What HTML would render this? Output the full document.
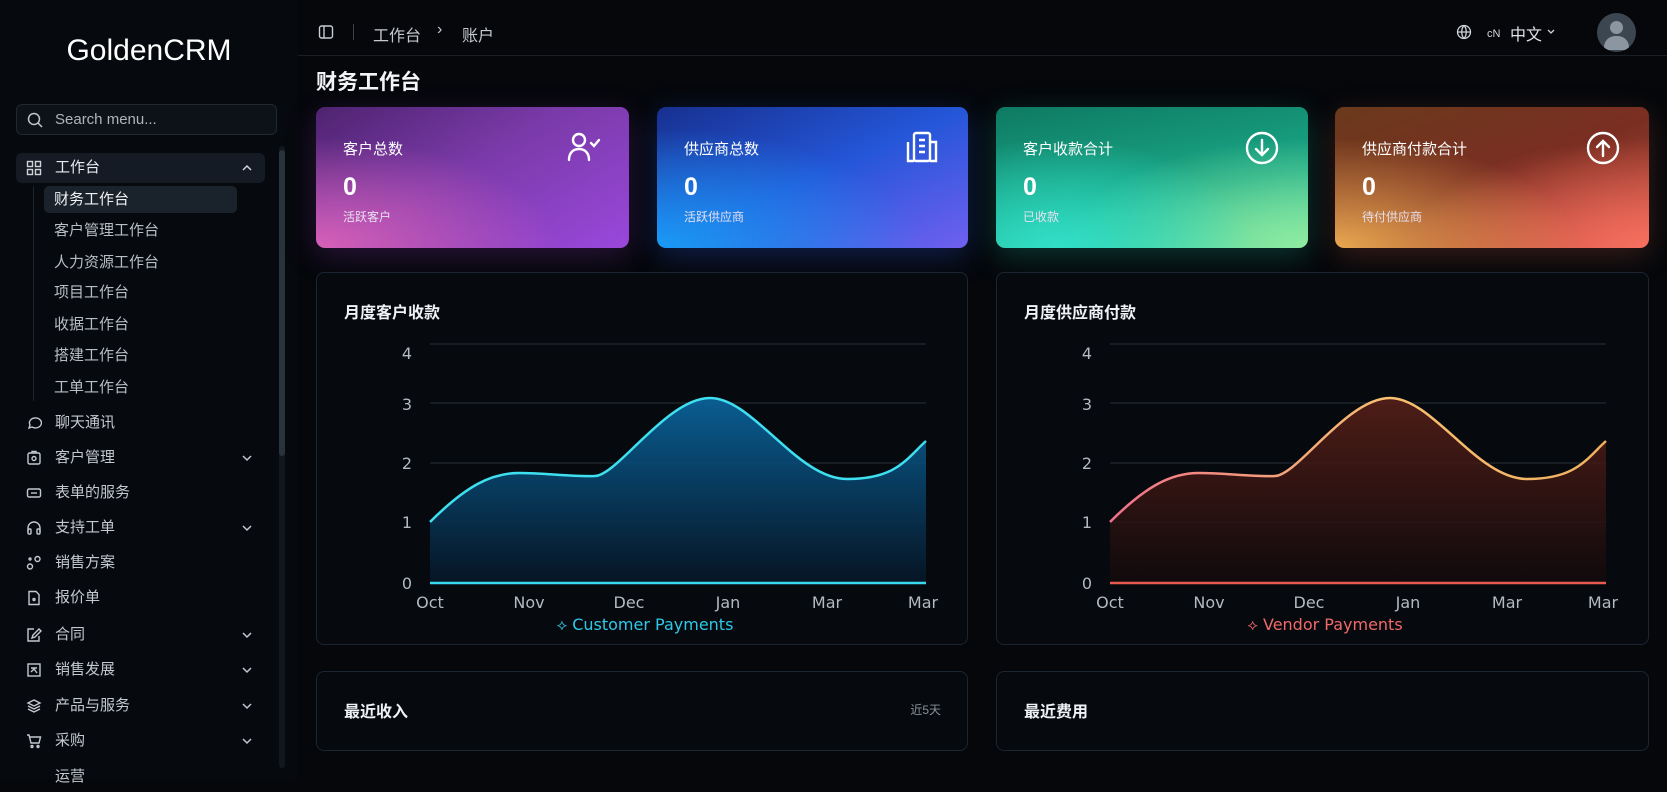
<!DOCTYPE html>
<html><head><meta charset="utf-8"><style>
*{box-sizing:border-box;margin:0;padding:0}
body{width:1667px;height:779px;overflow:hidden;background:#05070b;font-family:"Liberation Sans","Noto Sans CJK SC",sans-serif;color:#d6dae0;position:relative}
.abs{position:absolute}
#side{left:0;top:0;width:298px;height:779px;background:#06090d}
.logo{left:0;width:298px;top:34px;text-align:center;font-size:30px;color:#fff}
.search{left:16px;top:104px;width:261px;height:31px;border:1px solid #1f2731;border-radius:6px;background:#0d1218;font-size:15px;color:#aeb4bc;padding:6px 0 0 38px}
.mi{left:16px;width:249px;height:30px;font-size:15px;color:#c4c9d0;padding-left:39px;line-height:30px}
.mi svg.ic{position:absolute;left:10px;top:7px}
.mi .ch{position:absolute;left:225px;top:10px}
.sub{left:44px;width:193px;height:27px;font-size:15px;color:#b8bec6;padding-left:10px;line-height:27px}
.hdr{left:298px;top:55px;width:1369px;height:1px;background:#1a1f26}
.card{top:107px;height:141px;border-radius:9px;overflow:hidden}
.card .l{position:absolute;left:27px;top:31px;font-size:15px;color:#fff}
.card .n{position:absolute;left:27px;top:66px;font-size:25px;font-weight:bold;color:#fff}
.card .s{position:absolute;left:27px;top:101px;font-size:12px;color:#e8e0f0}
.card svg{position:absolute;right:28px;top:23px}
.panel{border:1px solid #1c2530;border-radius:8px;background:#06090e}
.pt{position:absolute;left:27px;font-size:16px;font-weight:bold;color:#f0f2f5}
</style></head><body>
<div id="side" class="abs"></div>
<div class="abs logo">GoldenCRM</div>
<div class="abs search"><svg class="abs" style="left:10px;top:7px" width="16" height="16" viewBox="0 0 16 16" fill="none" stroke="#c0c6ce" stroke-width="1.5"><circle cx="7" cy="7" r="5.5"/><path d="M11 11l4 4"/></svg>Search menu...</div>
<div class="abs mi" style="top:153px;height:30px;background:#141b24;border-radius:6px;color:#e8ebef"><svg class="ic" width="16" height="16" viewBox="0 0 16 16" fill="none" stroke="#d0d4da" stroke-width="1.4"><rect x="1.5" y="1.5" width="5" height="5"/><rect x="9.5" y="1.5" width="5" height="5"/><rect x="1.5" y="9.5" width="5" height="5"/><rect x="9.5" y="9.5" width="5" height="5"/></svg>工作台<svg class="ch" width="12" height="10" viewBox="0 0 12 10" fill="none" stroke="#d0d4da" stroke-width="1.5"><path d="M2 7l4-4 4 4"/></svg></div>
<div class="abs" style="left:33px;top:186px;width:1px;height:215px;background:#1c232c"></div>
<div class="abs sub" style="top:186px;background:#1a222c;border-radius:5px;color:#f0f2f4">财务工作台</div>
<div class="abs sub" style="top:217px">客户管理工作台</div>
<div class="abs sub" style="top:249px">人力资源工作台</div>
<div class="abs sub" style="top:279px">项目工作台</div>
<div class="abs sub" style="top:311px">收据工作台</div>
<div class="abs sub" style="top:342px">搭建工作台</div>
<div class="abs sub" style="top:374px">工单工作台</div>
<div class="abs mi" style="top:408px"><svg class="ic" width="16" height="16" viewBox="0 0 16 16" fill="none" stroke="#c4c9d0" stroke-width="1.4"><path d="M3 13l1-3a6 5 0 1 1 2 2z"/></svg>聊天通讯</div>
<div class="abs mi" style="top:443px"><svg class="ic" width="16" height="16" viewBox="0 0 16 16" fill="none" stroke="#c4c9d0" stroke-width="1.4"><rect x="2" y="3" width="12" height="11" rx="1.5"/><circle cx="8" cy="8.5" r="2"/><path d="M6 3V1.5h4V3"/></svg>客户管理<svg class="ch" width="12" height="10" viewBox="0 0 12 10" fill="none" stroke="#c4c9d0" stroke-width="1.5"><path d="M2 3l4 4 4-4"/></svg></div>
<div class="abs mi" style="top:478px"><svg class="ic" width="16" height="16" viewBox="0 0 16 16" fill="none" stroke="#c4c9d0" stroke-width="1.4"><rect x="1.5" y="4" width="13" height="8" rx="1.5"/><path d="M5 8h6"/></svg>表单的服务</div>
<div class="abs mi" style="top:513px"><svg class="ic" width="16" height="16" viewBox="0 0 16 16" fill="none" stroke="#c4c9d0" stroke-width="1.4"><path d="M2 12V8a6 6 0 0 1 12 0v4"/><rect x="2" y="9" width="3" height="5" rx="1"/><rect x="11" y="9" width="3" height="5" rx="1"/></svg>支持工单<svg class="ch" width="12" height="10" viewBox="0 0 12 10" fill="none" stroke="#c4c9d0" stroke-width="1.5"><path d="M2 3l4 4 4-4"/></svg></div>
<div class="abs mi" style="top:548px"><svg class="ic" width="16" height="16" viewBox="0 0 16 16" fill="none" stroke="#c4c9d0" stroke-width="1.4"><circle cx="4" cy="11.5" r="2.5"/><circle cx="11.5" cy="4" r="2.5"/><circle cx="4" cy="4" r="1"/></svg>销售方案</div>
<div class="abs mi" style="top:583px"><svg class="ic" width="16" height="16" viewBox="0 0 16 16" fill="none" stroke="#c4c9d0" stroke-width="1.4"><path d="M3 1.5h7l3 3v10H3z"/><circle cx="8" cy="9.5" r="1"/></svg>报价单</div>
<div class="abs mi" style="top:620px"><svg class="ic" width="16" height="16" viewBox="0 0 16 16" fill="none" stroke="#c4c9d0" stroke-width="1.4"><path d="M13 9v5H2V2h6"/><path d="M6 11l1-3 6-6 2 2-6 6z"/></svg>合同<svg class="ch" width="12" height="10" viewBox="0 0 12 10" fill="none" stroke="#c4c9d0" stroke-width="1.5"><path d="M2 3l4 4 4-4"/></svg></div>
<div class="abs mi" style="top:655px"><svg class="ic" width="16" height="16" viewBox="0 0 16 16" fill="none" stroke="#c4c9d0" stroke-width="1.4"><rect x="2" y="2" width="12" height="12"/><path d="M5 6h6M5 10l3-3 3 4"/></svg>销售发展<svg class="ch" width="12" height="10" viewBox="0 0 12 10" fill="none" stroke="#c4c9d0" stroke-width="1.5"><path d="M2 3l4 4 4-4"/></svg></div>
<div class="abs mi" style="top:691px"><svg class="ic" width="16" height="16" viewBox="0 0 16 16" fill="none" stroke="#c4c9d0" stroke-width="1.4"><path d="M8 2l6 3-6 3-6-3z"/><path d="M2 8l6 3 6-3M2 11l6 3 6-3"/></svg>产品与服务<svg class="ch" width="12" height="10" viewBox="0 0 12 10" fill="none" stroke="#c4c9d0" stroke-width="1.5"><path d="M2 3l4 4 4-4"/></svg></div>
<div class="abs mi" style="top:726px"><svg class="ic" width="16" height="16" viewBox="0 0 16 16" fill="none" stroke="#c4c9d0" stroke-width="1.4"><path d="M1 2h2l2 8h8l1.5-6H4"/><circle cx="6" cy="13.5" r="1"/><circle cx="12" cy="13.5" r="1"/></svg>采购<svg class="ch" width="12" height="10" viewBox="0 0 12 10" fill="none" stroke="#c4c9d0" stroke-width="1.5"><path d="M2 3l4 4 4-4"/></svg></div>
<div class="abs mi" style="top:762px">运营</div>
<div class="abs" style="left:279px;top:146px;width:6px;height:622px;background:#12171d;border-radius:3px"></div>
<div class="abs" style="left:279px;top:150px;width:6px;height:306px;background:#2a323c;border-radius:3px"></div>

<div class="abs hdr"></div>
<svg class="abs" style="left:318px;top:24px" width="16" height="16" viewBox="0 0 16 16" fill="none" stroke="#c8cdd3" stroke-width="1.4"><rect x="1.5" y="2" width="13" height="12" rx="2"/><path d="M6 2v12"/></svg>
<div class="abs" style="left:353px;top:24px;width:1px;height:16px;background:#3a414a"></div>
<div class="abs" style="left:373px;top:22px;font-size:16px;color:#c4c9d0">工作台</div>
<div class="abs" style="left:437px;top:21px;font-size:16px;color:#c4c9d0">›</div>
<div class="abs" style="left:462px;top:22px;font-size:16px;color:#c4c9d0">账户</div>
<svg class="abs" style="left:1456px;top:24px" width="16" height="16" viewBox="0 0 16 16" fill="none" stroke="#d0d4da" stroke-width="1.3"><circle cx="8" cy="8" r="6.5"/><path d="M1.5 8h13M8 1.5c-3 3-3 10 0 13M8 1.5c3 3 3 10 0 13"/></svg>
<div class="abs" style="left:1487px;top:28px;font-size:11px;color:#d0d4da">cN</div>
<div class="abs" style="left:1510px;top:21px;font-size:16px;color:#e0e3e7">中文</div>
<svg class="abs" style="left:1546px;top:28px" width="10" height="8" viewBox="0 0 10 8" fill="none" stroke="#d0d4da" stroke-width="1.3"><path d="M2 2l3 3 3-3"/></svg>
<div class="abs" style="left:1597px;top:13px;width:39px;height:39px;border-radius:50%;background:#3c4650;overflow:hidden"><div class="abs" style="left:13px;top:8px;width:13px;height:13px;border-radius:50%;background:#8c96a0"></div><div class="abs" style="left:7px;top:23px;width:25px;height:14px;border-radius:12px 12px 3px 3px;background:#8c96a0"></div></div>

<div class="abs" style="left:316px;top:66px;font-size:21px;font-weight:bold;color:#f2f4f6">财务工作台</div>

<div class="abs card" style="left:316px;width:313px;background:radial-gradient(ellipse at 0% 100%,#d860b8 0%,transparent 55%),linear-gradient(150deg,#4e2370 0%,#7a3aa8 45%,#9a48dc 100%);box-shadow:0 8px 30px rgba(150,60,200,.25)">
<div class="l">客户总数</div><div class="n">0</div><div class="s">活跃客户</div>
<svg width="36" height="34" viewBox="0 0 36 34" fill="none" stroke="#fff" stroke-width="2.4" stroke-linecap="round"><circle cx="14" cy="10" r="6"/><path d="M4 30c0-7 4-11 10-11s10 4 10 11"/><path d="M26 13l3 3 5-6"/></svg></div>
<div class="abs card" style="left:657px;width:311px;background:radial-gradient(ellipse at 0% 100%,#1a9af5 0%,transparent 60%),linear-gradient(155deg,#17308f 0%,#2456d8 50%,#7060f0 100%);box-shadow:0 8px 30px rgba(40,90,230,.3)">
<div class="l">供应商总数</div><div class="n">0</div><div class="s">活跃供应商</div>
<svg width="36" height="34" viewBox="0 0 36 34" fill="none" stroke="#fff" stroke-width="2.4"><rect x="10" y="3" width="16" height="28" rx="2"/><path d="M4 12v19h6M26 12h6v19h-6M15 10h6M15 16h6M15 22h6"/></svg></div>
<div class="abs card" style="left:996px;width:312px;background:radial-gradient(ellipse at 20% 100%,#30e0c8 0%,transparent 55%),radial-gradient(ellipse at 100% 100%,#90eca0 0%,transparent 55%),linear-gradient(170deg,#0e7a62 0%,#1aa888 60%,#50d0a0 100%);box-shadow:0 8px 30px rgba(30,200,160,.25)">
<div class="l">客户收款合计</div><div class="n">0</div><div class="s">已收款</div>
<svg width="36" height="36" viewBox="0 0 36 36" fill="none" stroke="#fff" stroke-width="2.4" stroke-linecap="round"><circle cx="18" cy="18" r="15"/><path d="M18 10v15M12 19l6 6 6-6"/></svg></div>
<div class="abs card" style="left:1335px;width:314px;background:radial-gradient(ellipse at 0% 100%,#eaa850 0%,transparent 55%),radial-gradient(ellipse at 100% 100%,#f87060 0%,transparent 55%),linear-gradient(160deg,#6a3a1c 0%,#7a2e22 50%,#c85040 100%);box-shadow:0 8px 30px rgba(230,110,70,.22)">
<div class="l">供应商付款合计</div><div class="n">0</div><div class="s">待付供应商</div>
<svg width="36" height="36" viewBox="0 0 36 36" fill="none" stroke="#fff" stroke-width="2.4" stroke-linecap="round"><circle cx="18" cy="18" r="15"/><path d="M18 26V11M12 17l6-6 6 6"/></svg></div>

<div class="abs panel" style="left:316px;top:272px;width:652px;height:373px">
<div class="pt" style="top:26px">月度客户收款</div>
<svg class="abs" style="left:0;top:0" width="652" height="373" font-family="DejaVu Sans,sans-serif">
<defs><linearGradient id="f1" x1="0" y1="0" x2="0" y2="1"><stop offset="0" stop-color="#0a66a0"/><stop offset="1" stop-color="#061626"/></linearGradient></defs>
<g stroke="#2a313a" stroke-width="1"><path d="M113 71H609M113 130H609M113 190H609M113 249H609"/></g>
<path d="M113 249 C150 212 175 200 202 200 S255 204 278 203 S350 125 393 125 S480 206 530 206 S590 185 609 168 V310 H113Z" fill="url(#f1)" opacity=".9"/>
<path d="M113 249 C150 212 175 200 202 200 S255 204 278 203 S350 125 393 125 S480 206 530 206 S590 185 609 168" fill="none" stroke="#3ee0f0" stroke-width="2.5"/>
<path d="M113 310H609" stroke="#3ad8f0" stroke-width="2.5"/>
<g fill="#b4bac2" font-size="16" text-anchor="middle"><text x="90" y="86">4</text><text x="90" y="137">3</text><text x="90" y="196">2</text><text x="90" y="255">1</text><text x="90" y="316">0</text>
<text x="113" y="335">Oct</text><text x="212" y="335">Nov</text><text x="312" y="335">Dec</text><text x="411" y="335">Jan</text><text x="510" y="335">Mar</text><text x="606" y="335">Mar</text></g>
<text x="328" y="357" fill="#30c8e8" font-size="16" text-anchor="middle">⟡ Customer Payments</text>
</svg></div>

<div class="abs panel" style="left:996px;top:272px;width:653px;height:373px">
<div class="pt" style="top:26px">月度供应商付款</div>
<svg class="abs" style="left:0;top:0" width="653" height="373" font-family="DejaVu Sans,sans-serif">
<defs><linearGradient id="f2" x1="0" y1="0" x2="0" y2="1"><stop offset="0" stop-color="#5a2018"/><stop offset="1" stop-color="#120a0c"/></linearGradient><linearGradient id="s2" x1="0" y1="0" x2="1" y2="0"><stop offset="0" stop-color="#f0708a"/><stop offset=".55" stop-color="#f8c070"/><stop offset="1" stop-color="#f0b060"/></linearGradient></defs>
<g stroke="#2a313a" stroke-width="1"><path d="M113 71H609M113 130H609M113 190H609M113 249H609"/></g>
<path d="M113 249 C150 212 175 200 202 200 S255 204 278 203 S350 125 393 125 S480 206 530 206 S590 185 609 168 V310 H113Z" fill="url(#f2)" opacity=".85"/>
<path d="M113 249 C150 212 175 200 202 200 S255 204 278 203 S350 125 393 125 S480 206 530 206 S590 185 609 168" fill="none" stroke="url(#s2)" stroke-width="2.5"/>
<path d="M113 310H609" stroke="#e85a50" stroke-width="2.5"/>
<g fill="#b4bac2" font-size="16" text-anchor="middle"><text x="90" y="86">4</text><text x="90" y="137">3</text><text x="90" y="196">2</text><text x="90" y="255">1</text><text x="90" y="316">0</text>
<text x="113" y="335">Oct</text><text x="212" y="335">Nov</text><text x="312" y="335">Dec</text><text x="411" y="335">Jan</text><text x="510" y="335">Mar</text><text x="606" y="335">Mar</text></g>
<text x="328" y="357" fill="#f06a6a" font-size="16" text-anchor="middle">⟡ Vendor Payments</text>
</svg></div>

<div class="abs panel" style="left:316px;top:671px;width:652px;height:80px"><div class="pt" style="top:26px">最近收入</div><div class="abs" style="right:26px;top:29px;font-size:12px;color:#8a9098">近5天</div></div>
<div class="abs panel" style="left:996px;top:671px;width:653px;height:80px"><div class="pt" style="top:26px">最近费用</div></div>
</body></html>
